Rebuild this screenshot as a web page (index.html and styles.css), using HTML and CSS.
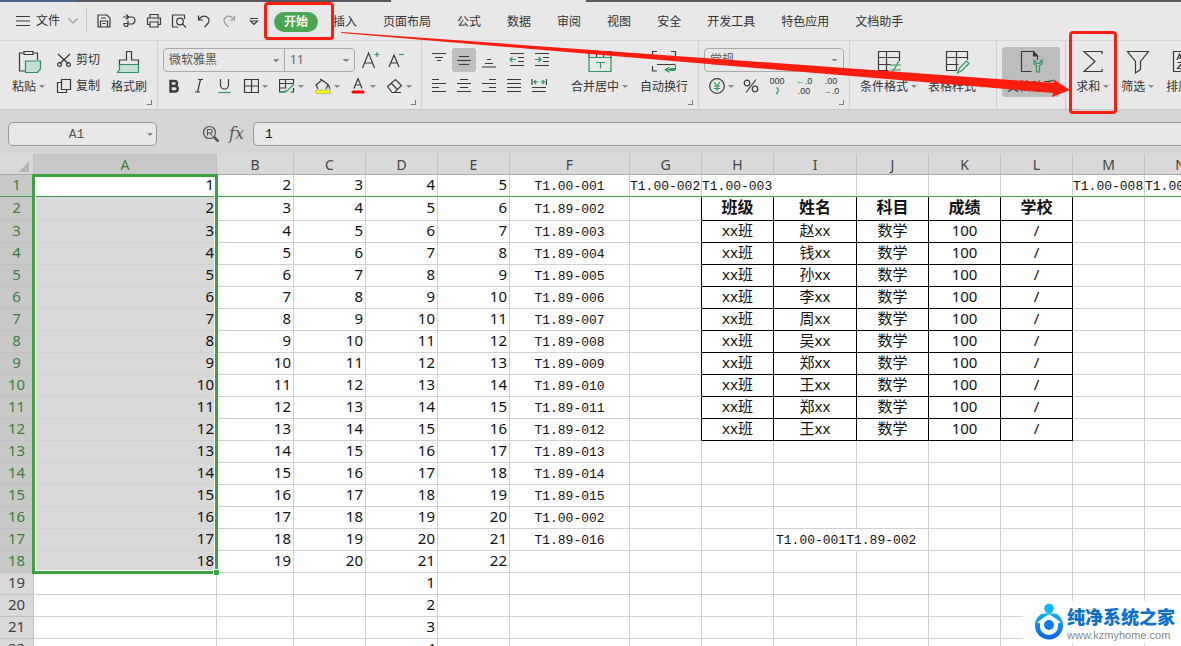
FILE: index.html
```html
<!DOCTYPE html>
<html lang="zh-CN">
<head>
<meta charset="utf-8">
<title>表格</title>
<link rel="stylesheet" href="styles.css">
</head>
<body>
<div class="app">
  <div class="strip"><span class="strip-home"></span><span class="strip-tab"></span><span class="strip-active"></span><span class="strip-rest"></span></div>

  <header class="menubar">
    <button class="file-menu">
      <svg width="14" height="12" viewBox="0 0 14 12"><path d="M0 1.500h14M0 6h14M0 10.500h14"/></svg>
      文件
      <svg class="faint" width="10" height="8" viewBox="0 0 10 8"><path d="M.5 1.500l4.500 4.500 4.500-4.500"/></svg>
    </button>
    <div class="quick">
      <button aria-label="保存"><svg width="16" height="16" viewBox="0 0 16 16"><path d="M2 2h9l3 3v9h-12zM4.500 14v-6h7v6M5 5h5M6.500 10.500h3"/></svg></button>
      <button aria-label="输出"><svg width="16" height="16" viewBox="0 0 16 16"><path d="M2 4h8.500a3.500 3.500 0 0 1 0 7h-3.500M5 1.500l3 2.500-3 2.500M7 7.500v4a2 2 0 0 1-4 0v-1h4"/></svg></button>
      <button aria-label="打印"><svg width="16" height="16" viewBox="0 0 16 16"><path d="M4 5v-3.500h8v3.500M4 11.500h-2.500v-6.500h13v6.500h-2.500M4 9h8v5h-8zM11.500 7h1"/></svg></button>
      <button aria-label="打印预览"><svg width="16" height="16" viewBox="0 0 16 16"><path d="M7 14h-5.500v-12h12v4M11.500 11l3.500 3.500"/><circle cx="9" cy="8.500" r="3.300"/></svg></button>
      <button aria-label="撤销"><svg width="16" height="16" viewBox="0 0 16 16"><path d="M2.500 2.500v4.500h4.500M3 6.500c2-3 5-4 8-2.500 3 2 2.500 5 0 7.500l-2.500 2.500"/></svg></button>
      <button aria-label="恢复" class="faint"><svg width="16" height="16" viewBox="0 0 16 16"><path d="M13.500 2.500v4.500h-4.500M13 6.500c-2-3-5-4-8-2.500-3 2-2.500 5 0 7.500l2.500 2.500"/></svg></button>
      <button aria-label="自定义"><svg width="16" height="16" viewBox="0 0 16 16"><path d="M4 5.500h8M4.500 8l3.500 3.500 3.500-3.500z"/></svg></button>
    </div>
    <nav class="tabs">
      <button class="tab-active">开始</button>
      <button>插入</button><button>页面布局</button><button>公式</button><button>数据</button><button>审阅</button><button>视图</button><button>安全</button><button>开发工具</button><button>特色应用</button><button>文档助手</button>
    </nav>
  </header>

  <section class="ribbon">
    <div class="group clip">
      <button class="big"><svg width="26" height="26" viewBox="0 0 26 26"><path d="M8 4h-4.500v18h6M17 4h4.500v7M8 2.500h9v3h-9z"/><path class="mint" d="M9.500 12h15v8l-3 3.500h-12z"/></svg><span>粘贴<i class="caret"></i></span></button>
      <div class="stack">
        <button><svg width="16" height="16" viewBox="0 0 16 16"><path d="M2 2l10 9.500M14 2l-10 9.500"/><circle cx="3.500" cy="12.500" r="1.900"/><circle cx="12.500" cy="12.500" r="1.900"/></svg>剪切</button>
        <button><svg width="16" height="16" viewBox="0 0 16 16"><path d="M5.500 1.500h9v10h-9zM5.500 4.500h-4v10h9v-3"/></svg>复制</button>
      </div>
      <button class="big"><svg width="26" height="26" viewBox="0 0 26 26"><path class="mint" d="M3.500 15.500h19v8h-21l2-3z"/><path d="M3.500 15.500v-4.500h7v-8.500h5v8.500h7v4.500"/></svg><span>格式刷</span></button>
      <i class="corner"></i>
    </div>

    <div class="group font">
      <div class="line">
        <div class="combo">
          <select class="face" aria-label="字体"><option>微软雅黑</option></select>
          <select class="size" aria-label="字号"><option>11</option></select>
        </div>
        <button aria-label="增大字号"><svg width="20" height="20" viewBox="0 0 20 20"><path d="M1.500 18l6-15 6 15M3.500 13h8"/><path class="g" d="M16 2v5M13.500 4.500h5"/></svg></button>
        <button aria-label="减小字号"><svg width="18" height="20" viewBox="0 0 18 20"><path d="M2 17l5-12 5 12M3.500 13h7"/><path class="g" d="M12 4.500h5"/></svg></button>
      </div>
      <div class="line tools">
        <button aria-label="加粗"><svg width="16" height="16" viewBox="0 0 16 16"><path class="fat" d="M4.500 3h4a2.500 2.500 0 0 1 0 5h-4zM4.500 8h4.500a2.500 2.500 0 0 1 0 5.500h-4.500z"/></svg></button>
        <button aria-label="倾斜"><svg width="16" height="16" viewBox="0 0 16 16"><path d="M7 1.500h5M4 14h5M9.500 1.500l-3 12.500"/></svg></button>
        <button aria-label="下划线"><svg width="16" height="16" viewBox="0 0 16 16"><path d="M4.500 1v6a4 4 0 0 0 8 0v-6"/><path class="g" d="M2.500 14.500h12"/></svg></button>
        <button class="drop" aria-label="边框"><svg width="16" height="16" viewBox="0 0 16 16"><path d="M1.500 1.500h14v13h-14zM8.500 1.500v13M1.500 8h14"/></svg><i class="caret"></i></button>
        <button class="drop" aria-label="表格"><svg width="16" height="16" viewBox="0 0 16 16"><path d="M14.500 5v-3.500h-14v12.500h5M.5 5.500h14M.5 10h7M6.500 1.500v8.500M14.500 10v4h-3"/><path class="g" d="M15 6l-7 7h-3M.5 14h7"/></svg><i class="caret"></i></button>
        <button class="drop" aria-label="填充颜色"><svg width="16" height="16" viewBox="0 0 16 16"><path d="M3 11l-2-4 6-5 6 4.500-2 4.500M5 1l3 2M13.500 7l1.500 4"/><rect x=".5" y="12" width="15" height="3.500" rx="1.500" fill="#ff0" stroke="#888" stroke-width=".5"/></svg><i class="caret"></i></button>
        <button class="drop" aria-label="字体颜色"><svg width="16" height="16" viewBox="0 0 16 16"><path d="M3 10.500l4-10 4 10M4.500 7h5"/><path class="red" d="M2 14h10"/></svg><i class="caret"></i></button>
        <button class="drop" aria-label="清除"><svg width="16" height="16" viewBox="0 0 16 16"><path d="M.5 8.500l8-7 6 6-7 7h-2.500zM4.500 5.500l6 6M8 14.500h6"/></svg><i class="caret"></i></button>
      </div>
      <i class="corner"></i>
    </div>

    <div class="group align">
      <div class="stack">
        <div class="line">
          <button aria-label="顶端对齐"><svg width="16" height="16" viewBox="0 0 16 16"><path d="M1 1.500h14M4 5.500h8M6 8.500h4"/></svg></button>
          <button class="on" aria-label="垂直居中"><svg width="16" height="16" viewBox="0 0 16 16"><path d="M3 4.500h10M1 8.500h14M3 12.500h10"/></svg></button>
          <button aria-label="底端对齐"><svg width="16" height="16" viewBox="0 0 16 16"><path d="M6 7.500h4M4 11.500h8M1 15h14"/></svg></button>
          <button class="gap" aria-label="减少缩进"><svg width="16" height="16" viewBox="0 0 16 16"><path d="M1 1.500h14M9 5.500h6M9 9.500h6M1 13.500h14"/><path class="g" d="M7 7.500h-6M3.500 5l-2.500 2.500 2.500 2.500"/></svg></button>
          <button aria-label="增加缩进"><svg width="16" height="16" viewBox="0 0 16 16"><path d="M1 1.500h14M9 5.500h6M9 9.500h6M1 13.500h14"/><path class="g" d="M1 7.500h6M4.500 5l2.500 2.500-2.500 2.500"/></svg></button>
        </div>
        <div class="line">
          <button aria-label="左对齐"><svg width="16" height="16" viewBox="0 0 16 16"><path d="M1 1.500h7M1 5.500h14M1 9.500h7M1 13.500h14"/></svg></button>
          <button aria-label="居中"><svg width="16" height="16" viewBox="0 0 16 16"><path d="M4 1.500h8M1 5.500h14M4 9.500h8M1 13.500h14"/></svg></button>
          <button aria-label="右对齐"><svg width="16" height="16" viewBox="0 0 16 16"><path d="M8 1.500h7M1 5.500h14M8 9.500h7M1 13.500h14"/></svg></button>
          <button aria-label="两端对齐"><svg width="16" height="16" viewBox="0 0 16 16"><path d="M1 1.500h14M1 5.500h14M1 9.500h14M1 13.500h14"/></svg></button>
          <button aria-label="分散对齐"><svg width="16" height="16" viewBox="0 0 16 16"><path d="M1 1v6M15.500 1v6M1 9.500h14M1 13.500h14"/><path class="g" d="M7 4h-4M5 2l-2 2 2 2M9.500 4h4M11.500 2l2 2-2 2"/></svg></button>
        </div>
      </div>
      <button class="big merge"><svg width="26" height="26" viewBox="0 0 26 26"><path d="M2 9v-6.500h22v6.500M9.500 2.500v6M16.500 2.500v6"/><path class="g" d="M2 8.500h22v14h-22zM9 13.500h9M13.500 13.500v6"/></svg><span>合并居中<i class="caret"></i></span></button>
      <button class="big"><svg width="26" height="26" viewBox="0 0 26 26"><path d="M1.500 7v-4.500h4.500M20 2.500h4.500v4.500M1.500 17v5h4.500M6 15.500h18"/><path class="g" d="M24.500 15.500v5h-9"/><path class="solid" d="M18.500 17.500l-5.500 3.200 5.500 3.200zM17 19h7v3h-7z"/></svg><span>自动换行</span></button>
      <i class="corner"></i>
    </div>

    <div class="group number">
      <div class="line"><select class="format" aria-label="数字格式"><option>常规</option></select></div>
      <div class="line tools">
        <button class="drop" aria-label="货币"><svg width="16" height="16" viewBox="0 0 16 16"><circle cx="8" cy="8" r="7.300"/><path class="g" d="M5 4l3 4 3-4M8 8v5M5 8h6M5 10.500h6"/></svg><i class="caret"></i></button>
        <button aria-label="百分比"><svg width="16" height="16" viewBox="0 0 16 16"><path d="M13 1.500l-10 13"/><circle cx="4" cy="5" r="2.800"/><circle cx="12" cy="11" r="2.800"/></svg></button>
        <button class="digits" aria-label="千位分隔"><span>000</span><svg width="6" height="9" viewBox="0 0 6 9"><path class="g" d="M2 2h2v4l-2 2"/></svg></button>
        <button class="digits" aria-label="增加小数位"><span><b>←</b>.0</span><span>.00</span></button>
        <button class="digits" aria-label="减少小数位"><span>.00</span><span><b>→</b>.0</span></button>
      </div>
      <i class="corner"></i>
    </div>

    <div class="group styles">
      <button class="big"><svg width="26" height="26" viewBox="0 0 26 26"><path d="M23.500 12v-9.500h-21v19h10M2.500 8.500h21M2.500 15.500h12M10.500 2.500v19"/><path class="g" d="M14 16h11M14 21h11M23 12l-7 12"/></svg><span>条件格式<i class="caret"></i></span></button>
      <button class="big"><svg width="26" height="26" viewBox="0 0 26 26"><path d="M23.500 11v-8.500h-21v19h10M2.500 8.500h21M2.500 15.500h12M12.500 2.500v19"/><path class="g" d="M13.500 24l2-5 7-7 2.500 2.500-7 7z"/></svg><span>表格样式<i class="caret"></i></span></button>
    </div>

    <div class="group helper">
      <button class="big on"><svg width="26" height="26" viewBox="0 0 26 26"><path d="M19.500 11v-4l-4-4.500h-12v20h10"/><path class="ink" d="M15.500 2.500v4.500h4z"/><path class="g" d="M16 11v4l2.500 1.500v6.500h3v-6.500l2.500-1.500v-4l-2 2v1.500h-4v-1.500z"/></svg><span>文档助手</span></button>
    </div>

    <div class="group edit">
      <button class="big"><svg width="26" height="26" viewBox="0 0 26 26"><path d="M22 5v-2.500h-18l11 10-11 10h18v-2.500"/></svg><span>求和<i class="caret"></i></span></button>
      <button class="big"><svg width="26" height="26" viewBox="0 0 26 26"><path d="M2.500 2.500h21l-8 10v8l-5 3.500v-11.500z"/></svg><span>筛选<i class="caret"></i></span></button>
      <button class="big"><svg width="26" height="26" viewBox="0 0 26 26"><path d="M3.500 2.500h19v20h-19zM7 11l2.500-6 2.500 6M8 9h4M7.500 13.500h5l-5 6h5M17.500 5v14M15 16l2.500 3 2.500-3"/></svg><span>排序<i class="caret"></i></span></button>
    </div>
  </section>

  <section class="formula">
    <div class="namebox"><input aria-label="名称框" value="A1"><i class="caret"></i></div>
    <svg width="18" height="18" viewBox="0 0 18 18"><circle cx="7.500" cy="7.500" r="6"/><path d="M5.500 10.500v-6h3a1.500 1.500 0 0 1 0 3.500h-3M8 8l2 2.500"/><path d="M12 12l4.500 4.500" stroke-width="2.500"/></svg>
    <label for="fx">fx</label>
    <input id="fx" value="1">
  </section>

  <main class="sheet">
    <table>
      <colgroup><col class="c-head"><col class="c-a"><col class="c-b"><col><col><col><col class="c-f"><col><col><col class="c-i"><col><col><col><col><col></colgroup>
      <thead><tr><th class="all"></th><th class="sel">A</th><th>B</th><th>C</th><th>D</th><th>E</th><th>F</th><th>G</th><th>H</th><th>I</th><th>J</th><th>K</th><th>L</th><th>M</th><th>N</th></tr></thead>
      <tbody class="picked">
        <tr class="frozen"><th>1</th><td>1</td><td>2</td><td>3</td><td>4</td><td>5</td><td>T1.00-001</td><td>T1.00-002</td><td class="spill">T1.00-003</td><td></td><td></td><td></td><td></td><td>T1.00-008</td><td>T1.00-009</td></tr>
        <tr class="boxed title"><th>2</th><td>2</td><td>3</td><td>4</td><td>5</td><td>6</td><td>T1.89-002</td><td></td><td>班级</td><td>姓名</td><td>科目</td><td>成绩</td><td>学校</td><td></td><td></td></tr>
        <tr class="boxed"><th>3</th><td>3</td><td>4</td><td>5</td><td>6</td><td>7</td><td>T1.89-003</td><td></td><td>xx班</td><td>赵xx</td><td>数学</td><td>100</td><td>/</td><td></td><td></td></tr>
        <tr class="boxed"><th>4</th><td>4</td><td>5</td><td>6</td><td>7</td><td>8</td><td>T1.89-004</td><td></td><td>xx班</td><td>钱xx</td><td>数学</td><td>100</td><td>/</td><td></td><td></td></tr>
        <tr class="boxed"><th>5</th><td>5</td><td>6</td><td>7</td><td>8</td><td>9</td><td>T1.89-005</td><td></td><td>xx班</td><td>孙xx</td><td>数学</td><td>100</td><td>/</td><td></td><td></td></tr>
        <tr class="boxed"><th>6</th><td>6</td><td>7</td><td>8</td><td>9</td><td>10</td><td>T1.89-006</td><td></td><td>xx班</td><td>李xx</td><td>数学</td><td>100</td><td>/</td><td></td><td></td></tr>
        <tr class="boxed"><th>7</th><td>7</td><td>8</td><td>9</td><td>10</td><td>11</td><td>T1.89-007</td><td></td><td>xx班</td><td>周xx</td><td>数学</td><td>100</td><td>/</td><td></td><td></td></tr>
        <tr class="boxed"><th>8</th><td>8</td><td>9</td><td>10</td><td>11</td><td>12</td><td>T1.89-008</td><td></td><td>xx班</td><td>吴xx</td><td>数学</td><td>100</td><td>/</td><td></td><td></td></tr>
        <tr class="boxed"><th>9</th><td>9</td><td>10</td><td>11</td><td>12</td><td>13</td><td>T1.89-009</td><td></td><td>xx班</td><td>郑xx</td><td>数学</td><td>100</td><td>/</td><td></td><td></td></tr>
        <tr class="boxed"><th>10</th><td>10</td><td>11</td><td>12</td><td>13</td><td>14</td><td>T1.89-010</td><td></td><td>xx班</td><td>王xx</td><td>数学</td><td>100</td><td>/</td><td></td><td></td></tr>
        <tr class="boxed"><th>11</th><td>11</td><td>12</td><td>13</td><td>14</td><td>15</td><td>T1.89-011</td><td></td><td>xx班</td><td>郑xx</td><td>数学</td><td>100</td><td>/</td><td></td><td></td></tr>
        <tr class="boxed"><th>12</th><td>12</td><td>13</td><td>14</td><td>15</td><td>16</td><td>T1.89-012</td><td></td><td>xx班</td><td>王xx</td><td>数学</td><td>100</td><td>/</td><td></td><td></td></tr>
        <tr><th>13</th><td>13</td><td>14</td><td>15</td><td>16</td><td>17</td><td>T1.89-013</td><td></td><td></td><td></td><td></td><td></td><td></td><td></td><td></td></tr>
        <tr><th>14</th><td>14</td><td>15</td><td>16</td><td>17</td><td>18</td><td>T1.89-014</td><td></td><td></td><td></td><td></td><td></td><td></td><td></td><td></td></tr>
        <tr><th>15</th><td>15</td><td>16</td><td>17</td><td>18</td><td>19</td><td>T1.89-015</td><td></td><td></td><td></td><td></td><td></td><td></td><td></td><td></td></tr>
        <tr><th>16</th><td>16</td><td>17</td><td>18</td><td>19</td><td>20</td><td>T1.00-002</td><td></td><td></td><td></td><td></td><td></td><td></td><td></td><td></td></tr>
        <tr><th>17</th><td>17</td><td>18</td><td>19</td><td>20</td><td>21</td><td>T1.89-016</td><td></td><td></td><td class="spill code">T1.00-001T1.89-002</td><td></td><td></td><td></td><td></td><td></td></tr>
        <tr><th>18</th><td>18</td><td>19</td><td>20</td><td>21</td><td>22</td><td></td><td></td><td></td><td></td><td></td><td></td><td></td><td></td><td></td></tr>
      </tbody>
      <tbody>
        <tr><th>19</th><td></td><td></td><td></td><td>1</td><td></td><td></td><td></td><td></td><td></td><td></td><td></td><td></td><td></td><td></td></tr>
        <tr><th>20</th><td></td><td></td><td></td><td>2</td><td></td><td></td><td></td><td></td><td></td><td></td><td></td><td></td><td></td><td></td></tr>
        <tr><th>21</th><td></td><td></td><td></td><td>3</td><td></td><td></td><td></td><td></td><td></td><td></td><td></td><td></td><td></td><td></td></tr>
        <tr><th>22</th><td></td><td></td><td></td><td>4</td><td></td><td></td><td></td><td></td><td></td><td></td><td></td><td></td><td></td><td></td></tr>
      </tbody>
    </table>
    <div class="selection"><i></i></div>
  </main>

  <div class="mark mark-tab"></div>
  <div class="mark mark-sum"></div>
  <svg class="arrow" width="1181" height="120" viewBox="0 0 1181 120"><path d="M341 32L1054 83l-1-4 17 11-18 7 1-4L341 33z"/></svg>

  <aside class="brand">
    <svg width="28" height="38" viewBox="0 0 28 38">
      <defs><linearGradient id="ring" x1="0" y1="0" x2="0" y2="1"><stop offset="0" stop-color="#0bb5f5"/><stop offset="1" stop-color="#0a5ff0"/></linearGradient></defs>
      <path fill="url(#ring)" d="M6 11a14 14 0 1 0 16 0l-8-1z"/>
      <path fill="#fff" d="M14 11L2.500 19l1.200 1.600L5 19.800v3.700a9 8.500 0 0 0 18 0v-3.700l1.300.8 1.200-1.600z"/>
      <circle cx="14" cy="5.500" r="4.800" fill="#0bb8f6"/><circle cx="14" cy="22" r="5" fill="#0a7af0"/>
    </svg>
    <div><strong>纯净系统之家</strong><span>www.kzmyhome.com</span></div>
  </aside>
</div>
</body>
</html>
```

FILE: styles.css
```css
* { box-sizing: border-box; }
body { margin: 0; overflow: hidden; font: 12px/18px "Noto Sans", "Noto Sans CJK SC", sans-serif; color: #333; background: #fff; }
.app { position: relative; height: 100vh; overflow: hidden; }
button { display: flex; align-items: center; margin: 0; padding: 0; border: 0; background: none; font: inherit; color: inherit; white-space: nowrap; flex: none; }
svg { flex: none; fill: none; stroke: #3a3a3a; stroke-width: 1.2; }
.g { stroke: #2c9a5c; }
.mint { fill: #c3e0d2; stroke: #2f8f62; }
.solid { fill: #2c9a5c; stroke: none; }
.ink { fill: #3a3a3a; }
.red { stroke: #f00; stroke-width: 3; stroke-linecap: round; }
.fat { stroke-width: 2.4; }
.faint { opacity: .45; }
select, input { margin: 0; border: 0; outline: 0; background-color: transparent; color: #555; font: inherit; appearance: none; }

.strip { display: flex; height: 2px; background: #e8e8e8; }
.strip-home { flex: 0 0 76px; background: #48648f; }
.strip-tab { flex: 0 0 315px; background: #59565f; }
.strip-active { flex: 0 0 195px; }
.strip-rest { flex: 1; background: #59565f; }

.menubar { display: flex; align-items: center; height: 39px; background: #e8e8e8; border-bottom: 1px solid #d6d6d6; }
.file-menu { gap: 6px; height: 24px; margin-left: 16px; padding-right: 8px; border-right: 1px solid #c4c4c4; }
.file-menu .faint { margin-left: 2px; }
.quick { display: flex; gap: 9px; margin-left: 9px; }
.tabs { display: flex; align-items: center; gap: 26px; margin-left: 12px; padding-top: 2px; }
.tabs .tab-active { padding: 1px 10px; margin-right: -11px; border-radius: 10px; background: #4aa653; color: #fff; font-weight: 700; }

.ribbon { display: flex; height: 69px; background: #e8e8e8; border-bottom: 1px solid #c6c6c6; }
.group { position: relative; display: flex; flex: none; padding-top: 6px; border-right: 1px solid #d0d0d0; }
.corner { position: absolute; right: 5px; bottom: 4px; width: 5px; height: 5px; border: solid #777; border-width: 0 1px 1px 0; }
.caret { display: inline-block; flex: none; width: 6px; border: solid transparent; border-width: 3px 3px 0; border-top-color: #888; margin-left: 3px; vertical-align: 3px; }
.line { display: flex; align-items: center; height: 26px; }
.stack { display: flex; flex-direction: column; }
.big { flex-direction: column; height: 50px; padding-top: 2px; }
.big span { line-height: 24px; }
.on { background: #bdbdbd; border-radius: 3px; }
.clip { padding-left: 12px; padding-right: 10px; gap: 11px; }
.clip .stack button { height: 26px; gap: 4px; }
.font, .number { flex-direction: column; padding-left: 5px; }
.font { padding-right: 9px; }
.font .line { gap: 6px; }
.combo { display: flex; height: 24px; border: 1px solid #aaa; border-radius: 4px; }
select { height: 22px; padding: 0 5px; line-height: 18px; background: linear-gradient(45deg, transparent 50%, #888 50%) right 8px center / 3px 3px no-repeat, linear-gradient(-45deg, transparent 50%, #888 50%) right 5px center / 3px 3px no-repeat; }
.face { width: 120px; }
.size { width: 70px; border-left: 1px solid #aaa; color: #666; }
.font .tools { padding-left: 3px; gap: 11px; }
.font .tools button:nth-child(-n+2) { margin-right: -2px; }
.align { padding-left: 5px; padding-right: 10px; gap: 12px; }
.align .line { gap: 1px; }
.align .line button { width: 24px; height: 24px; justify-content: center; }
.align .line .gap { margin-left: 3px; }
.merge { padding-left: 5px; }
.number { padding-right: 5px; }
.format { width: 140px; height: 24px; border: 1px solid #aaa; border-radius: 4px; }
.number .tools { gap: 9px; padding-left: 5px; }
.digits { flex-direction: column; height: 20px; width: 18px; font: 9px/10px "Liberation Sans", sans-serif; }
.digits b { color: #2c9a5c; }
.styles { padding-left: 10px; padding-right: 11px; gap: 11px; }
.helper { padding-left: 5px; padding-right: 5px; }
.helper .big { padding-left: 5px; padding-right: 5px; }
.edit { padding-left: 10px; gap: 12px; border-right: 0; }

.formula { display: flex; align-items: center; height: 44px; padding-top: 4px; padding-left: 8px; background: #d6d6d6; }
.formula svg { margin-left: 45px; stroke: #555; }
.formula label { width: 34px; padding-left: 9px; font: italic 16px/22px "DejaVu Serif", serif; color: #555; }
.formula input { height: 22px; padding-top: 2px; font: 13px/20px "Liberation Mono", monospace; }
.namebox { display: flex; align-items: center; width: 149px; height: 24px; padding-right: 3px; border: 1px solid #999; border-radius: 5px; background: #e8e8e8; }
.namebox input { flex: 1; min-width: 0; text-align: center; }
.formula #fx { flex: 1; height: 24px; padding-left: 11px; border: 1px solid #999; border-right: 0; border-radius: 5px 0 0 5px; background: #e8e8e8; color: #111; margin-left: -1px; }

.sheet { position: relative; }
table { width: 1217px; table-layout: fixed; border-collapse: separate; border-spacing: 0; color: #111; }
col { width: 72px; }
.c-head { width: 34px; }
.c-a { width: 183px; }
.c-b { width: 77px; }
.c-f { width: 120px; }
.c-i { width: 83px; }
th, td { height: 22px; padding: 0 0 2px; border: solid #d0d0d0; border-width: 0 1px 1px 0; font-size: 15px; line-height: 19px; font-weight: 400; white-space: nowrap; }
th { background: #d9d9d9; color: #444; border-color: #c0c0c0; text-align: center; }
thead th { height: 21px; padding: 0; font-size: 14px; border-bottom-color: #aaa; }
.all { background: linear-gradient(135deg, transparent 50%, #b4b4b4 50%) 18px 7px / 11px 11px no-repeat #d9d9d9; }
.sel, .picked th { background: #c8c8c8; color: #38803c; }
.picked td:nth-child(2) { background: #d9d9d9; }
.picked .frozen td:nth-child(2) { background: #fff; }
td { padding-right: 2px; text-align: right; }
td:nth-child(n+7) { padding-right: 0; text-align: center; }
td:nth-child(7), td.code, .frozen td:nth-child(n+7) { padding-top: 3px; padding-bottom: 0; font: 13px/18px "Liberation Mono", monospace; }
td.code, .frozen td:nth-child(n+8) { text-align: left; }
td.code { padding-left: 2px; }
.spill { border-right-color: transparent; }
.frozen th, .frozen td { border-bottom-color: #3f9b4c; }
.title th, .title td { height: 24px; }
.boxed td:nth-child(n+8):nth-child(-n+13) { border-right-color: #000; }
.boxed td:nth-child(n+9):nth-child(-n+13) { border-bottom-color: #000; }
.title td:nth-child(n+9) { font-size: 16px; font-weight: 700; }
.selection { position: absolute; left: 32px; top: 20px; width: 186px; height: 400px; border: 3px solid #3ba43e; box-shadow: inset 0 0 0 1px #fff; }
.selection i { position: absolute; right: -4px; bottom: -4px; width: 6px; height: 6px; background: #3ba43e; border: solid #fff; border-width: 1px 0 0 1px; }

.mark { position: absolute; border: 3px solid #fb1e0e; border-radius: 4px; }
.mark-tab { left: 264px; top: 2px; width: 70px; height: 38px; }
.mark-sum { left: 1069px; top: 31px; width: 48px; height: 83px; }
.arrow { position: absolute; left: 0; top: 0; pointer-events: none; }
.arrow path { fill: #fb1e0e; stroke: none; }

.brand { position: absolute; right: 0; bottom: 3px; display: flex; align-items: center; gap: 4px; padding: 2px 6px 2px 12px; background: #fff; }
.brand svg { stroke: none; }
.brand strong { display: block; font: 900 18px/26px "Noto Sans CJK SC", sans-serif; color: #0a70cc; }
.brand span { display: block; font: 11px/12px "Liberation Sans", sans-serif; color: #888; }
```
